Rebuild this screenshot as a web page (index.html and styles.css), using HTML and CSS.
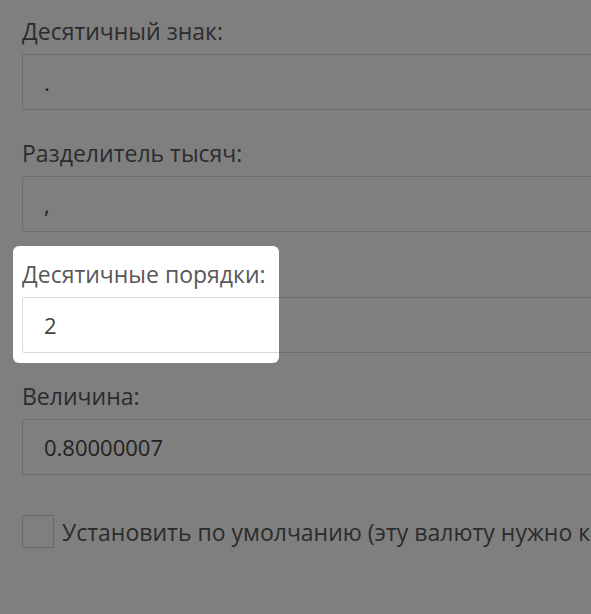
FILE: index.html
```html
<!DOCTYPE html>
<html lang="ru">
<head>
<meta charset="utf-8">
<title>Валюта</title>
<link rel="stylesheet" href="styles.css">
</head>
<body>
<form class="form">
  <div class="group">
    <label class="label">Десятичный знак:</label>
    <div class="input">.</div>
  </div>
  <div class="group">
    <label class="label">Разделитель тысяч:</label>
    <div class="input">,</div>
  </div>
  <div class="group">
    <label class="label">Десятичные порядки:</label>
    <div class="input">2</div>
  </div>
  <div class="group">
    <label class="label">Величина:</label>
    <div class="input">0.80000007</div>
  </div>
  <div class="check-row">
    <span class="checkbox"></span>
    <span class="check-text">Установить по умолчанию (эту валюту нужно конвертировать)</span>
  </div>
</form>
<div class="spotlight"></div>
</body>
</html>
```
FILE: styles.css
```css
html, body {
  margin: 0;
  padding: 0;
  background: #ffffff;
  overflow: hidden;
  width: 591px;
  height: 614px;
}
body {
  position: relative;
  font-family: "Open Sans", "Noto Sans", sans-serif;
}
.form {
  padding: 16px 0 0 22px;
  width: 800px;
}
.group {
  margin-bottom: 27.7px;
}
.label {
  display: block;
  font-size: 23px;
  line-height: 30px;
  color: #585858;
  margin-bottom: 8px;
  white-space: nowrap;
}
.input {
  box-sizing: border-box;
  height: 56px;
  border: 1px solid #d2dcdc;
  border-radius: 2px;
  padding: 0 21px;
  display: flex;
  align-items: center;
  font-size: 22px;
  color: #444444;
}
.check-row {
  display: flex;
  align-items: center;
  gap: 8px;
  margin-top: 40px;
  white-space: nowrap;
}
.checkbox {
  box-sizing: border-box;
  width: 32px;
  height: 33px;
  border: 1px solid #d2d6d6;
  flex: none;
}
.check-text {
  font-size: 23px;
  color: #585858;
}
.spotlight {
  position: absolute;
  left: 13px;
  top: 246px;
  width: 266px;
  height: 117px;
  border-radius: 6px;
  box-shadow: 0 0 0 2000px rgba(0, 0, 0, 0.5);
}
```
